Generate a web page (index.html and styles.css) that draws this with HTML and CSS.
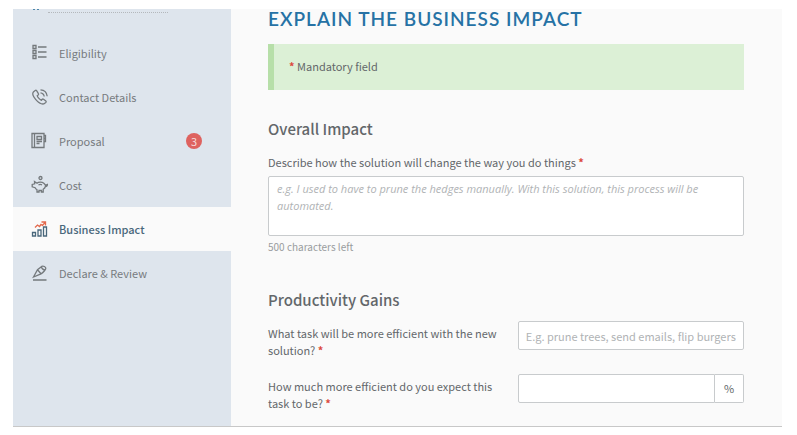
FILE: index.html
```html
<!DOCTYPE html>
<html lang="en">
<head>
<meta charset="UTF-8">
<meta name="viewport" content="width=device-width, initial-scale=1.0">
<title>Business Impact</title>
<link rel="stylesheet" href="styles.css">
</head>
<body>

<div class="page">
  <nav class="sidebar">
    <div class="sidebar-top">
      <svg width="8" height="2" viewBox="0 0 8 2"><path d="M1 0h2v1H1zM5 0h2v1H5z" fill="#4d87ab"/></svg>
      <span class="dotted-line"></span>
    </div>
    <a class="nav-item" href="#">
      <svg class="icon" viewBox="0 0 16 16">
        <path d="M1 .5h3v3H1zM1 5.500h3v3H1zM1 10.500h3v3H1zM6 2h8.500M6 7h8.500M6 12h8.500"/>
      </svg>
      <span>Eligibility</span>
    </a>
    <a class="nav-item" href="#">
      <svg class="icon" viewBox="0 0 16 16">
        <path d="M3.200 1.500 1.400 2.900C.3 4.200.8 7 3.600 10.300c3 3.500 6.200 5 8.200 4.600l2-1.500c.5-.4.5-.9.100-1.300l-2.400-1.900c-.4-.3-.9-.3-1.200.1l-.9 1c-1.500-.5-3.800-3-4.200-4.600l1-.8c.4-.3.5-.8.200-1.200L4.600 1.700c-.4-.5-.9-.5-1.400-.2z"/>
        <path d="M8.500 3.800c2 .2 3.400 1.600 3.700 3.700M8.500.8c3.700.2 6.300 2.700 6.700 6.400"/>
      </svg>
      <span>Contact Details</span>
    </a>
    <a class="nav-item" href="#">
      <svg class="icon" viewBox="0 0 16 16">
        <path d="M0 .5h12v14H0zM2.500.5v14M12 2.500h1.500v3H12M13.500 5.500v3H12M5 3.500h4.500v3H5zM4.500 8.500h5.500M4.500 10.500h3"/>
      </svg>
      <span>Proposal</span>
      <span class="badge">3</span>
    </a>
    <a class="nav-item" href="#">
      <svg class="icon" viewBox="0 0 16 16">
        <circle cx="8.500" cy="1" r="1.500"/>
        <path d="M2.500 4.500 5 6.200c1.500-1.300 5-1.400 6.800 0 1 .8 1.400 1.400 1.600 2.100l2-.8c.1 1.300-.7 1.900-2 2-.3 1.300-1.100 2.100-2.200 2.800V15H9.400v-1.500H7V15H5v-2.300c-.9-.5-1.500-1.200-1.900-2L.2 9.800V7.400l2.500-.6-.2-2.300zM6.500 7.800c1-.4 2.500-.4 3.500 0"/>
      </svg>
      <span>Cost</span>
    </a>
    <a class="nav-item active" href="#">
      <svg class="icon" viewBox="0 0 16 16">
        <path d="M.5 11.500h3V15h-3zM6 9h3v6H6zM11.500 6h3v9h-3z"/>
        <path class="trend" d="M3 6.500 5.500 4l2 1.500L9 3.500l1.500 1L13.500 1M9.500 1h4v3.500"/>
      </svg>
      <span>Business Impact</span>
    </a>
    <a class="nav-item" href="#">
      <svg class="icon" viewBox="0 0 16 16">
        <path d="M1.500 12 5.500 4.800 10 1.300c1.200-.8 4 .7 3.800 2.200C13.700 4.500 11.500 7.500 9 8.800L1.500 12zM5.500 4.800 9 8.800M10 1.300c-1.200 1.200.5 3.500 3 3.700M1 15h13.500"/>
      </svg>
      <span>Declare &amp; Review</span>
    </a>
  </nav>

  <main class="content">
    <h1>EXPLAIN THE BUSINESS IMPACT</h1>
    <p class="notice"><span class="required">*</span> Mandatory field</p>

    <form>
      <h2>Overall Impact</h2>
      <label for="impact">Describe how the solution will change the way you do things <span class="required">*</span></label>
      <textarea id="impact" placeholder="e.g. I used to have to prune the hedges manually. With this solution, this process will be automated." required></textarea>
      <p class="hint">500 characters left</p>

      <h2>Productivity Gains</h2>
      <div class="field">
        <label for="task">What task will be more efficient with the new solution? <span class="required">*</span></label>
        <input type="text" id="task" placeholder="E.g. prune trees, send emails, flip burgers" required>
      </div>
      <div class="field">
        <label for="efficiency">How much more efficient do you expect this task to be? <span class="required">*</span></label>
        <div class="input-group">
          <input type="text" id="efficiency" required>
          <span class="unit">%</span>
        </div>
      </div>
    </form>
  </main>
</div>

</body>
</html>
```
FILE: styles.css
```css
* {
  box-sizing: border-box;
}

body {
  margin: 9px 15px 8px 13px;
  background-color: #fff;
  color: #63676a;
  font-family: "Noto Sans CJK SC", sans-serif;
  font-size: 11px;
  line-height: 17px;
}

.page {
  display: flex;
  background-color: #fafafa;
  border-bottom: 1px solid #c8c8c8;
}

.sidebar {
  flex: 0 0 218px;
  background-color: #dee5ed;
}

.sidebar-top {
  display: flex;
  gap: 8px;
  height: 22px;
  padding-left: 19px;
}

.dotted-line {
  width: 120px;
  height: 4px;
  border-bottom: 1px dotted #b4b8bc;
}

.nav-item {
  display: flex;
  align-items: center;
  height: 44px;
  padding: 0 29px 0 19px;
  color: #777b7e;
  text-decoration: none;
}

.nav-item.active {
  background-color: #fafafa;
  color: #49677b;
  font-weight: 500;
}

.icon {
  width: 16px;
  height: 16px;
  margin-right: 11px;
  fill: none;
  stroke: #74797c;
  stroke-width: 1.3;
  overflow: visible;
}

.active .icon {
  stroke: #49677b;
}

.icon .trend {
  stroke: #e3694d;
}

.badge {
  width: 16px;
  height: 16px;
  margin-left: auto;
  border-radius: 50%;
  background-color: #de625f;
  color: #f6dcdc;
  line-height: 16px;
  text-align: center;
}

.content {
  flex: 1;
  padding: 0 38px 14px 37px;
}

h1 {
  margin: 0 0 15px;
  color: #2672a5;
  font-family: Lato, sans-serif;
  font-size: 19px;
  font-weight: 600;
  line-height: 20px;
  letter-spacing: 1px;
}

.notice {
  margin: 0 0 29px;
  padding: 14px 15px 15px;
  border-left: 6px solid #b7dfa9;
  background-color: #dcf0d6;
}

.required {
  color: #dc4a3d;
  font-weight: bold;
}

h2 {
  margin: 0 0 11px;
  font-size: 15px;
  font-weight: 500;
  line-height: 20px;
}

label {
  display: block;
  padding-top: 4px;
}

textarea,
input {
  display: block;
  width: 100%;
  border: 1px solid #c8cbcd;
  border-radius: 2px;
  background-color: #fff;
  color: #63676a;
  font: inherit;
}

textarea {
  height: 60px;
  margin-top: 5px;
  padding: 3px 8px;
  resize: none;
}

input {
  height: 29px;
  padding: 0 7px;
}

::placeholder {
  color: #b0b3b5;
}

textarea::placeholder {
  font-family: "Open Sans", sans-serif;
  font-style: italic;
}

.hint {
  margin: 2px 0 35px;
  color: #999c9e;
  font-size: 10px;
}

.field {
  display: grid;
  grid-template-columns: 21fr 20fr;
  column-gap: 12px;
  margin-bottom: 15px;
}

.field:last-child {
  margin-bottom: 0;
}

.input-group {
  display: flex;
  height: 29px;
}

.input-group input {
  flex: 1;
  border-radius: 2px 0 0 2px;
}

.unit {
  width: 29px;
  border: 1px solid #c8cbcd;
  border-left: 0;
  border-radius: 0 2px 2px 0;
  background-color: #fff;
  line-height: 27px;
  text-align: center;
}
```
